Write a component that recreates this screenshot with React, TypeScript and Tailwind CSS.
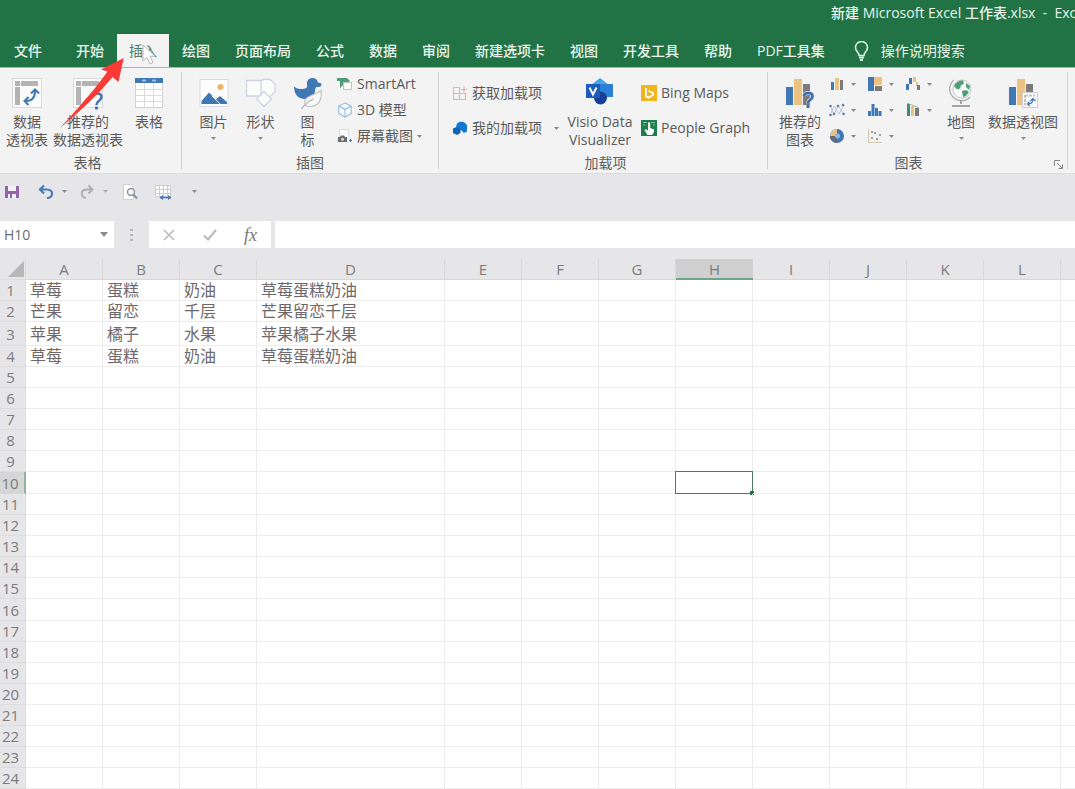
import React from "react";

type Kids = { children: React.ReactNode };

const BLUE = "#3f78b5";
const TAN = "#ecc283";
const GRAY = "#7b7b7b";

/* ---------- icons ---------- */

const Caret = ({ className = "" }: { className?: string }) => (
  <svg width="5" height="3" viewBox="0 0 5 3" className={className} aria-hidden="true">
    <path d="M0 0h5L2.500 3z" fill="#8a8a8a" />
  </svg>
);

const PivotBase = () => (
  <>
    <rect x="0.5" y="0.5" width="29" height="29" fill="#fbfbfb" stroke="#dadada" />
    <rect x="3" y="3" width="5" height="5" fill="#b3b3b3" />
    <rect x="9" y="3" width="17" height="5" fill="#b3b3b3" />
    <rect x="3" y="9" width="5" height="18" fill="#b3b3b3" />
  </>
);

const PivotTableIcon = () => (
  <svg width="30" height="30" viewBox="0 0 30 30" aria-hidden="true">
    <PivotBase />
    <path d="M14 23c7 0 9-4 9-10" fill="none" stroke={BLUE} strokeWidth="2" />
    <path d="M19 15.500l4-4 4 4M16.500 19l-4 4 4 4" fill="none" stroke={BLUE} strokeWidth="2" />
  </svg>
);

const RecommendedPivotIcon = () => (
  <svg width="30" height="32" viewBox="0 0 30 32" aria-hidden="true">
    <PivotBase />
    <path d="M19.500 18.500c.5-4 9-4 9 .5 0 4-5 3.500-5 8" fill="none" stroke={BLUE} strokeWidth="2.600" />
    <rect x="22" y="28.500" width="3" height="3" fill={BLUE} />
  </svg>
);

const TableIcon = () => (
  <svg width="30" height="30" viewBox="0 0 30 30" aria-hidden="true">
    <rect x="1.500" y="0.500" width="27" height="29" fill="#fff" stroke="#d2d2d2" />
    <path d="M10.500 5v25M19.500 5v25M1 11.500h28M1 17.500h28M1 23.500h28" stroke="#dadada" />
    <rect x="1" y="0" width="28" height="5" fill={BLUE} />
    <path d="M8 2.500h4M18 2.500h4" stroke="#9dbfe2" strokeWidth="2" />
  </svg>
);

const PictureIcon = () => (
  <svg width="30" height="30" viewBox="0 0 30 30" aria-hidden="true">
    <rect x="1" y="1.500" width="28" height="27" fill="#fdfdfd" stroke="#d8dce6" />
    <circle cx="21.500" cy="9" r="3" fill="#edb467" />
    <path d="M2.500 26v-3l7.500-8.500 7 7 4-3.500 7 6v2z" fill={BLUE} />
    <path d="M13 18l8 8" stroke="#e8eef6" strokeWidth="1" />
  </svg>
);

const ShapesIcon = () => (
  <svg width="32" height="30" viewBox="0 0 32 30" aria-hidden="true">
    <g fill="#fcfcfd" stroke="#ced2e3" strokeWidth="1.300">
      <circle cx="21.500" cy="10" r="9" />
      <path d="M1.500 2.500h14.500v15.500H1.500z" />
      <path d="M19 13.500l7.500 7.500-7.500 7.500-7.500-7.500z" />
    </g>
  </svg>
);

const DuckIcon = () => (
  <svg width="30" height="32" viewBox="0 0 30 32" aria-hidden="true">
    <path
      d="M14 6.500C13.500 2.500 16 0 19.500 0c3 0 5 2 5.500 4.500l3.500 1L28 8c-1 1-3 1.200-4.500.8-1 1.500-1.500 2.500-1.500 4 0 5.500-5.500 8.700-11 8.200-6.500-.5-10-5.500-10-12.500 3.500 2.700 7 3 11 2 2.300-.6 2.500-2 2-4z"
      fill={BLUE}
    />
    <path
      d="M28 12.500c1 9-1.500 16-12 16-3.500 0-5-2.500-4.200-5.500C13 17.500 21 18 28 12.500z"
      fill="#f8f8f8"
      stroke="#c4c4c4"
      strokeWidth="1.200"
    />
    <path d="M8.500 31c3-4.500 7-7.500 12-10" fill="none" stroke="#b4b4b4" strokeWidth="1.300" />
  </svg>
);

const SmartArtIcon = () => (
  <svg width="16" height="14" viewBox="0 0 16 14" aria-hidden="true">
    <path d="M0 1h10l3 3-3 2H6v2l-3 3v-7L0 4z" fill="#4f9a78" />
    <rect x="6.500" y="5.500" width="8" height="7" fill="#fafafa" stroke="#c3c3c3" />
  </svg>
);

const CubeIcon = () => (
  <svg width="16" height="16" viewBox="0 0 16 16" aria-hidden="true">
    <path
      d="M8 1l6.200 3v7.500L8 15l-6.200-3.500V4zM1.800 4L8 7.500 14.200 4M8 7.500V15"
      fill="#fbfdff"
      stroke="#8fb9e2"
      strokeWidth="1.100"
    />
  </svg>
);

const ScreenshotIcon = () => (
  <svg width="16" height="16" viewBox="0 0 16 16" aria-hidden="true">
    <path d="M2.500 9V1.500h9V9" fill="#fcfcfc" stroke="#dcdcdc" />
    <path d="M1 9h2l1-1.500h3L8 9h2v5H1z" fill="#6c6c6c" />
    <circle cx="5.500" cy="11.300" r="1.500" fill="#ddd" />
    <path d="M12 12.500h3M13.500 11v3" stroke={BLUE} />
  </svg>
);

const GetAddinsIcon = () => (
  <svg width="14" height="14" viewBox="0 0 14 14" aria-hidden="true">
    <g fill="none" stroke="#f0b0a6" strokeWidth="1.200">
      <path d="M.5 1.500h6v6h-6zM.5 7.500h6v6h-6zM6.500 7.500h6v6h-6z" />
      <path d="M8 3.500h6M11 .5v6" />
    </g>
  </svg>
);

const MyAddinsIcon = () => (
  <svg width="14" height="14" viewBox="0 0 14 14" aria-hidden="true">
    <path d="M4 2.500C6 .3 10 .3 12 2l2 2v6.500L11 12 8 9 3 6z" fill="#1378cf" />
    <path d="M0 7.500L3.500 6 7.500 7.800V12l-3.500 2L0 12z" fill="#0f62b4" />
  </svg>
);

const VisioIcon = () => (
  <svg width="30" height="28" viewBox="0 0 30 28" aria-hidden="true">
    <path d="M15 0l9 7v10H6V7z" fill="#45a5ea" />
    <rect x="15" y="6" width="13" height="13" fill="#2b7fd4" />
    <circle cx="15.500" cy="20" r="6.500" fill="#173f94" />
    <rect x="1" y="6" width="14" height="14" fill="#1c5cbc" />
    <path d="M4.500 9.500L8 16.500l3.500-7" fill="none" stroke="#fff" strokeWidth="2" />
  </svg>
);

const BingIcon = () => (
  <svg width="16" height="16" viewBox="0 0 16 16" aria-hidden="true">
    <rect width="16" height="16" fill="#f2b51d" />
    <path d="M5 3v8.500l2.500 1.300L12 10V7.800L7.500 6" fill="none" stroke="#fff" strokeWidth="1.800" />
  </svg>
);

const PeopleIcon = () => (
  <svg width="16" height="16" viewBox="0 0 16 16" aria-hidden="true">
    <rect width="16" height="16" fill="#1d7f4c" />
    <path d="M2 2.500h4M10 2.500h4M2 5h2M12 5h2" stroke="#8cc3a6" />
    <path d="M7 2.500h2.200V8l3.800 1.500V12l-2 3H6.500L3.500 10l1.500-.8 2 1.300z" fill="#fff" />
  </svg>
);

const BigBars = () => (
  <>
    <rect x="1" y="9" width="7" height="18" fill={BLUE} />
    <rect x="9" y="1" width="8" height="26" fill={TAN} />
    <rect x="18" y="6" width="7" height="21" fill={GRAY} />
  </>
);

const RecommendedChartsIcon = () => (
  <svg width="30" height="30" viewBox="0 0 30 30" aria-hidden="true">
    <BigBars />
    <path
      d="M19 18c.5-4 8.500-4 8.500.3 0 3.700-4.500 3.200-4.500 7"
      fill="none"
      stroke="#c9d6e6"
      strokeWidth="4"
    />
    <path d="M19 18c.5-4 8.500-4 8.500.3 0 3.700-4.500 3.200-4.500 7" fill="none" stroke="#416da8" strokeWidth="2.600" />
    <rect x="21.500" y="27" width="3" height="3" fill="#416da8" />
  </svg>
);

const PivotChartIcon = () => (
  <svg width="30" height="30" viewBox="0 0 30 30" aria-hidden="true">
    <BigBars />
    <rect x="14.500" y="14.500" width="15" height="15" fill="#fafafa" stroke="#cfcfcf" />
    <path d="M17 17.500h10M17 17v10" stroke="#c4c4c4" strokeWidth="2" strokeDasharray="3 1" />
    <path d="M20 26c4 0 5-2 5-5M22.500 23l2.500-2.500 2.500 2.500M21.500 23.500L19.500 26l2 2" fill="none" stroke={BLUE} strokeWidth="1.200" />
  </svg>
);

const MapIcon = () => (
  <svg width="26" height="30" viewBox="0 0 26 30" aria-hidden="true">
    <path d="M6 2C1 6 0 14 5 19s13 5 17 0" fill="none" stroke="#b4b4b4" strokeWidth="1.500" />
    <circle cx="14" cy="11" r="9" fill="#fbfbfb" stroke="#c2cbc6" />
    <path d="M6 8c2-4 5-5.500 9-5.500l1 3-3 2-1 3-3 1zM14 13l4-1 3 2-3 4-3 1zM18 5l4 3-1 4-3-3z" fill="#4d9f76" />
    <path d="M13 22v4M4 28h18" stroke="#a5a5a5" strokeWidth="2" />
  </svg>
);

const smallCharts: { name: string; art: React.ReactNode }[] = [
  {
    name: "柱形图",
    art: (
      <>
        <rect x="2" y="6" width="3" height="8" fill={BLUE} />
        <rect x="6" y="2" width="4" height="12" fill={TAN} />
        <rect x="11" y="4" width="3" height="10" fill={GRAY} />
      </>
    ),
  },
  {
    name: "层次结构图",
    art: (
      <>
        <rect x="1" y="1" width="6" height="14" fill={BLUE} />
        <rect x="7" y="1" width="8" height="8" fill={TAN} />
        <rect x="8" y="10" width="7" height="5" fill={GRAY} />
      </>
    ),
  },
  {
    name: "瀑布图",
    art: (
      <>
        <rect x="1" y="8" width="3" height="6" fill={BLUE} />
        <rect x="4" y="2" width="3" height="6" fill={BLUE} />
        <rect x="8" y="1" width="3" height="5" fill={TAN} />
        <rect x="11" y="6" width="2" height="4" fill={TAN} />
        <rect x="12" y="9" width="3" height="5" fill={GRAY} />
      </>
    ),
  },
  {
    name: "折线图",
    art: (
      <>
        <path d="M1 4l4 8 4-8 6 8M1 13l4-9 5 8 5-9" fill="none" stroke="#b9c8dc" />
        <g fill="#5f83b0">
          <circle cx="1.500" cy="4" r="1.300" />
          <circle cx="5" cy="12" r="1.300" />
          <circle cx="9" cy="4" r="1.300" />
          <circle cx="14.500" cy="12" r="1.300" />
          <circle cx="14" cy="3" r="1.300" />
          <circle cx="1.500" cy="13" r="1.300" />
        </g>
      </>
    ),
  },
  {
    name: "统计图",
    art: (
      <path d="M1 14V9h3v5zM4.500 14V2h3v12zM8 14V6h3v8zM11.500 14V9h3v5z" fill={BLUE} />
    ),
  },
  {
    name: "组合图",
    art: (
      <>
        <rect x="2" y="2" width="3" height="12" fill="#3f8b74" />
        <rect x="6" y="4" width="3" height="10" fill={TAN} />
        <rect x="10" y="6" width="4" height="8" fill={GRAY} />
        <path d="M2 1l12 5" stroke="#9ab5ad" />
      </>
    ),
  },
  {
    name: "饼图",
    art: (
      <>
        <circle cx="8" cy="8" r="7" fill={BLUE} />
        <path d="M8 8V1a7 7 0 0 0-7 7z" fill={TAN} />
        <path d="M8 8H1a7 7 0 0 0 7 7z" fill="#5d6b7b" />
        <circle cx="8.500" cy="8" r="2.500" fill="#8fb8e0" />
      </>
    ),
  },
  {
    name: "散点图",
    art: (
      <>
        <path d="M1.500 1v13.500H15" fill="none" stroke="#d6c6b2" />
        <g fill="#a0a0a0">
          <rect x="4" y="9" width="2" height="2" />
          <rect x="7" y="4" width="2" height="2" />
          <rect x="9" y="10" width="2" height="2" />
          <rect x="12" y="6" width="2" height="2" />
          <rect x="4" y="3" width="2" height="2" />
        </g>
      </>
    ),
  },
];

/* ---------- title bar and tabs ---------- */

const tabs = ["文件", "开始", "插入", "绘图", "页面布局", "公式", "数据", "审阅", "新建选项卡", "视图", "开发工具", "帮助", "PDF工具集"];

function Header() {
  return (
    <header className="shrink-0 border-b border-[#8fc3a5] bg-[#217346] text-[#e9f5ed]">
      <div className="flex h-[34px] justify-end overflow-hidden">
        <h1 className="w-[244px] overflow-hidden pt-1 text-sm leading-[18px] font-medium whitespace-pre">
          {"新建 Microsoft Excel 工作表.xlsx  -  Excel"}
        </h1>
      </div>
      <nav className="flex h-[33px] gap-px whitespace-nowrap text-sm leading-[18px] font-medium">
        {tabs.map((t) => (
          <button
            key={t}
            type="button"
            className={
              t === "插入"
                ? "relative bg-[#f3f3f3] px-3 font-normal text-[#4c7d62]"
                : t === "文件"
                  ? "mr-[7px] px-3.5"
                  : "px-3"
            }
          >
            {t}
            {t === "插入" && <Pointers />}
          </button>
        ))}
        <button type="button" className="flex items-center gap-3 pl-4 font-normal">
          <svg width="15" height="20" viewBox="0 0 15 20" aria-hidden="true">
            <path d="M5 14.500c0-3-3.500-4-3.500-8a6 6 0 0 1 12 0c0 4-3.500 5-3.500 8z" fill="none" stroke="#d7eee0" strokeWidth="1.600" />
            <path d="M5 16.500h5M6 19h3" stroke="#d7eee0" strokeWidth="2" />
          </svg>
          操作说明搜索
        </button>
      </nav>
    </header>
  );
}

/* Mouse pointer and the red arrow that points at the open tab. */
const Pointers = () => (
  <>
    <svg className="absolute top-2.5 left-6 z-10" width="18" height="22" viewBox="0 0 18 22" aria-hidden="true">
      <path d="M2 1l12 11-5 .3 3 6.200-3 1.500-3-6.500-4 3.500z" fill="#fff" stroke="#b9b3b6" />
    </svg>
    <svg className="absolute top-6 -left-[57px] z-10" width="64" height="72" viewBox="0 0 64 72" aria-hidden="true">
      <path d="M63.700 0L41 11.500 47.500 13.500C36 30 14 55 0 70 18 55 37 38 52.500 19L58.500 24z" fill="#fa3a36" />
    </svg>
  </>
);

/* ---------- ribbon ---------- */

const Group = ({ label, className, children, launcher }: Kids & { label: string; className: string; launcher?: boolean }) => (
  <section className="flex pt-1">
    <div className={"relative flex flex-col " + className}>
      <div className="flex h-[82px] shrink-0 items-start">{children}</div>
      <div className={launcher ? "pr-6 text-center leading-[18px] text-[#5e5e5e]" : "pr-2 text-center leading-[18px] text-[#5e5e5e]"}>{label}</div>
      {launcher && (
        <button type="button" aria-label="图表选项" className="absolute right-1 bottom-1">
          <svg width="9" height="9" viewBox="0 0 9 9" aria-hidden="true">
            <path d="M.5 6V.5H6M3 3l5 5M8.500 4.500v4h-4" fill="none" stroke="#858585" />
          </svg>
        </button>
      )}
    </div>
    <div className="mb-1 w-px bg-[#d2d2d2]" />
  </section>
);

const Big = ({ icon, lines, width, menu }: { icon: React.ReactNode; lines: string[]; width: string; menu?: boolean }) => (
  <button type="button" className={"flex shrink-0 flex-col items-center whitespace-nowrap leading-[18px] " + width}>
    <span className="flex h-[41px] items-start pt-1.5">{icon}</span>
    {lines.map((l) => (
      <span key={l}>{l}</span>
    ))}
    {menu && <Caret className="mt-1.5" />}
  </button>
);

const Small = ({ icon, text, menu, far }: { icon: React.ReactNode; text: string; menu?: boolean; far?: boolean }) => (
  <button type="button" className="flex items-center whitespace-nowrap leading-[18px]">
    <span className="mr-1 flex w-4 justify-center">{icon}</span>
    {text}
    {menu && <Caret className={far ? "ml-3" : "ml-1"} />}
  </button>
);

function Ribbon() {
  return (
    <div className="flex h-[105px] shrink-0 overflow-hidden bg-[#f3f3f3] text-sm text-[#5a5a5a]">
      <Group label="表格" className="w-[181px] pl-0.5">
        <Big icon={<PivotTableIcon />} lines={["数据", "透视表"]} width="w-[50px]" />
        <Big icon={<RecommendedPivotIcon />} lines={["推荐的", "数据透视表"]} width="w-[72px]" />
        <Big icon={<TableIcon />} lines={["表格"]} width="w-[50px]" />
      </Group>

      <Group label="插图" className="w-[256px] pl-2">
        <Big icon={<PictureIcon />} lines={["图片"]} width="w-[47px]" menu />
        <Big icon={<ShapesIcon />} lines={["形状"]} width="w-[47px]" menu />
        <Big icon={<DuckIcon />} lines={["图", "标"]} width="w-[47px]" />
        <div className="flex flex-col gap-2 pt-[3px] pl-1.5">
          <Small icon={<SmartArtIcon />} text="SmartArt" />
          <Small icon={<CubeIcon />} text="3D 模型" />
          <Small icon={<ScreenshotIcon />} text="屏幕截图" menu />
        </div>
      </Group>

      <Group label="加载项" className="w-[328px] pl-[13px]">
        <div className="flex flex-col gap-[17px] pt-3">
          <Small icon={<GetAddinsIcon />} text="获取加载项" />
          <Small icon={<MyAddinsIcon />} text="我的加载项" menu far />
        </div>
        <Big icon={<VisioIcon />} lines={["Visio Data", "Visualizer"]} width="w-[82px]" />
        <div className="flex flex-col gap-[17px] pt-3">
          <Small icon={<BingIcon />} text="Bing Maps" />
          <Small icon={<PeopleIcon />} text="People Graph" />
        </div>
      </Group>

      <Group label="图表" className="w-[299px] pl-1.5" launcher>
        <Big icon={<RecommendedChartsIcon />} lines={["推荐的", "图表"]} width="w-[52px]" />
        <div className="grid grid-cols-3 gap-x-[11px] gap-y-2.5 pt-1 pl-[3px]">
          {smallCharts.map((c) => (
            <button key={c.name} type="button" aria-label={c.name} className="flex items-center gap-1.5">
              <svg width="16" height="16" viewBox="0 0 16 16" aria-hidden="true">
                {c.art}
              </svg>
              <Caret />
            </button>
          ))}
        </div>
        <Big icon={<MapIcon />} lines={["地图"]} width="w-[58px]" menu />
        <Big icon={<PivotChartIcon />} lines={["数据透视图"]} width="w-[66px]" menu />
      </Group>
    </div>
  );
}

/* ---------- quick access bar and formula bar ---------- */

function QuickAccess() {
  return (
    <div className="flex h-9 shrink-0 items-center border-t border-[#dcdcdc] pl-1">
      <button type="button" aria-label="保存" className="mr-[18px]">
        <svg width="16" height="16" viewBox="0 0 16 16" aria-hidden="true">
          <path d="M1 2h14v12H1z" fill="#9563ab" />
          <path d="M4 2h8v5H4zM4 10h8v4H4z" fill="#f4f0f5" />
          <path d="M6 10h2v4H6z" fill="#9563ab" />
        </svg>
      </button>
      <button type="button" aria-label="撤消" className="flex items-center gap-2">
        <svg width="16" height="16" viewBox="0 0 16 16" aria-hidden="true">
          <path d="M2 5.500h7c7 0 6.500 8.500 0 8.500M6 1.500l-4 4 4 4" fill="none" stroke="#4679b5" strokeWidth="2.200" />
        </svg>
        <Caret />
      </button>
      <button type="button" aria-label="恢复" className="ml-3 flex items-center gap-2 opacity-60">
        <svg width="16" height="16" viewBox="0 0 16 16" aria-hidden="true">
          <path d="M13 5.500H8C1 5.500 1.500 13.500 7 14M9.500 1.500l4 4-4 4" fill="none" stroke="#8c8c8c" strokeWidth="2" />
        </svg>
        <Caret />
      </button>
      <button type="button" aria-label="打印预览" className="ml-3.5">
        <svg width="16" height="16" viewBox="0 0 16 16" aria-hidden="true">
          <path d="M1.500.5h7l3 3v12h-10z" fill="#fff" stroke="#d0d0d0" />
          <circle cx="9" cy="8" r="3.500" fill="#f3f6f9" stroke="#8d959e" strokeWidth="1.400" />
          <path d="M11.500 10.500l3.500 4" stroke="#8d959e" strokeWidth="2" />
        </svg>
      </button>
      <button type="button" aria-label="列宽" className="ml-4">
        <svg width="18" height="16" viewBox="0 0 18 16" aria-hidden="true">
          <path d="M1.500 1.500h15v11h-15zM1.500 5.500h15M1.500 9.500h15M5.500 1.500v11M9.500 1.500v11M13.500 1.500v11" fill="#fff" stroke="#cdcdcd" />
          <path d="M6 13.500h11" stroke="#4679b5" strokeWidth="1.600" />
          <path d="M9 11l-3.500 2.500L9 16zM14 11l3.500 2.500L14 16z" fill="#4679b5" />
        </svg>
      </button>
      <button type="button" aria-label="自定义快速访问工具栏" className="ml-5 flex h-4 items-center">
        <Caret />
      </button>
    </div>
  );
}

function FormulaBar() {
  return (
    <div className="mt-3 flex h-[27px] shrink-0 items-stretch">
      <div className="flex w-[114px] items-center bg-white pr-1.5">
        <input aria-label="名称框" defaultValue="H10" className="w-full min-w-0 flex-1 bg-transparent pl-1 text-sm text-[#6c6c6c] outline-none" />
        <button type="button" aria-label="名称列表">
          <svg width="8" height="5" viewBox="0 0 8 5" aria-hidden="true">
            <path d="M0 0h8L4 5z" fill="#8a8a8a" />
          </svg>
        </button>
      </div>
      <svg className="mx-4 self-center" width="3" height="14" viewBox="0 0 3 14" aria-hidden="true">
        <path d="M0 1h3v2H0zM0 6h3v2H0zM0 11h3v2H0z" fill="#b5b5b5" />
      </svg>
      <div className="mr-1 flex w-[122px] items-center justify-between bg-white px-3.5">
        <button type="button" aria-label="取消">
          <svg width="12" height="12" viewBox="0 0 12 12" aria-hidden="true">
            <path d="M1 1l10 10M11 1L1 11" stroke="#b9b9b9" strokeWidth="1.500" />
          </svg>
        </button>
        <button type="button" aria-label="输入">
          <svg width="14" height="12" viewBox="0 0 14 12" aria-hidden="true">
            <path d="M1 6.500l4 4L13 1" fill="none" stroke="#b9b9b9" strokeWidth="2" />
          </svg>
        </button>
        <button type="button" className="font-['Liberation_Serif',serif] text-[18px] leading-5 text-[#777] italic">
          fx
        </button>
      </div>
      <input aria-label="编辑栏" className="min-w-0 flex-1 bg-white px-2 text-sm outline-none" />
    </div>
  );
}

/* ---------- worksheet ---------- */

const columns = ["A", "B", "C", "D", "E", "F", "G", "H", "I", "J", "K", "L"];

const data: string[][] = [
  ["草莓", "蛋糕", "奶油", "草莓蛋糕奶油"],
  ["芒果", "留恋", "千层", "芒果留恋千层"],
  ["苹果", "橘子", "水果", "苹果橘子水果"],
  ["草莓", "蛋糕", "奶油", "草莓蛋糕奶油"],
];

const rowHeight = (n: number) => (n === 3 ? "h-6" : n === 10 || n === 16 ? "h-[22px]" : "h-[21px]");

function Sheet() {
  return (
    <div className="mt-[11px] min-h-0 flex-1 overflow-hidden bg-white">
      <table className="w-[1138px] table-fixed border-separate border-spacing-0">
        <colgroup>
          <col className="w-[26px]" />
          {columns.map((c) => (
            <col key={c} className={c === "D" ? "w-[188px]" : "w-[77px]"} />
          ))}
          <col className="w-[77px]" />
        </colgroup>
        <thead>
          <tr className="h-[21px] bg-[#e6e6e8] text-[15px] leading-5 text-[#7c7c7c]">
            <th className="border-r border-b border-[#dcdcdc] p-0" aria-label="全选">
              <svg className="ml-2" width="16" height="16" viewBox="0 0 16 16" aria-hidden="true">
                <path d="M16 0v16H0z" fill="#b6b6b6" />
              </svg>
            </th>
            {columns.map((c) => (
              <th
                key={c}
                scope="col"
                className={
                  c === "H"
                    ? "border-b border-[#6fa587] bg-[#d0d0d0] p-0 font-normal shadow-[inset_0_-1px_0_#6fa587]"
                    : "border-r border-b border-[#d8d8d8] p-0 font-normal"
                }
              >
                {c}
              </th>
            ))}
            <th className="border-b border-[#d8d8d8] p-0" />
          </tr>
        </thead>
        <tbody>
          {Array.from({ length: 24 }, (_, i) => i + 1).map((n) => (
            <tr key={n} className={rowHeight(n)}>
              <th
                scope="row"
                className={
                  n === 10
                    ? "border-r-2 border-b border-r-[#8fb5a0] border-b-[#d8d8d8] bg-[#d6d6d6] p-0 pr-1 text-center text-[15px] leading-5 font-normal text-[#7c7c7c]"
                    : "border-r border-b border-[#dcdcdc] bg-[#e6e6e8] p-0 pr-1 text-center text-[15px] leading-5 font-normal text-[#7c7c7c]"
                }
              >
                {n}
              </th>
              {columns.map((c, j) => (
                <td
                  key={c}
                  className="relative border-r border-b border-[#ececec] p-0 pl-1 text-base leading-5 whitespace-nowrap text-[#6e686b]"
                >
                  {data[n - 1]?.[j]}
                  {c === "H" && n === 10 && (
                    <span className="absolute -inset-px border border-[#4b7a62]">
                      <span className="absolute -right-0.5 -bottom-0.5 size-1 bg-[#217346]" />
                    </span>
                  )}
                </td>
              ))}
              <td className="border-b border-[#ececec] p-0" />
            </tr>
          ))}
        </tbody>
      </table>
    </div>
  );
}

export default function App() {
  return (
    <div className="flex h-screen flex-col overflow-hidden bg-[#e6e6e8] font-['Open_Sans','Noto_Sans_CJK_SC',sans-serif]">
      <Header />
      <Ribbon />
      <QuickAccess />
      <FormulaBar />
      <Sheet />
    </div>
  );
}
